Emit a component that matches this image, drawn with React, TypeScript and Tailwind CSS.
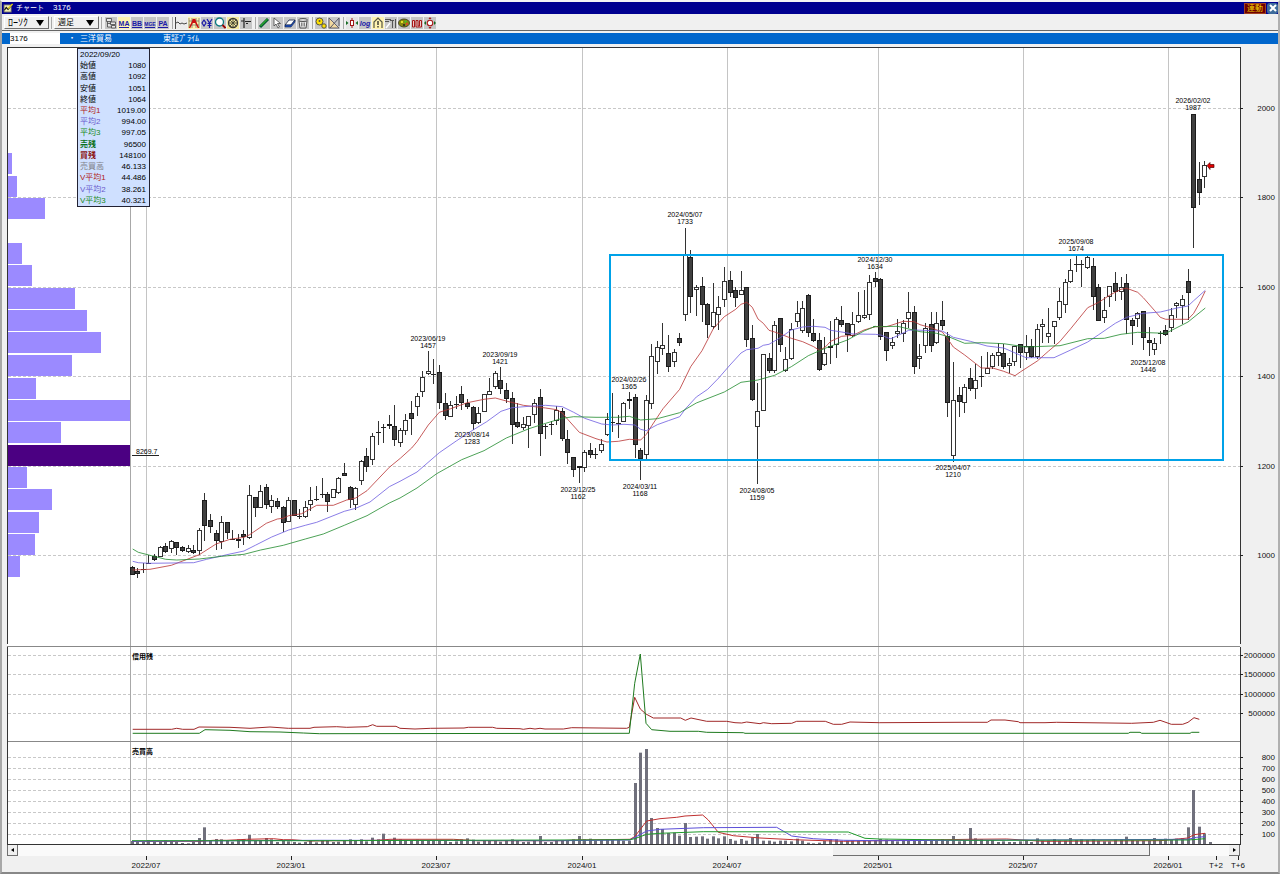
import React from "react";

type Point = [number, number];
// [hollow (1) or filled (0), body top, body bottom, wick top, wick bottom]
type Candle = [number, number, number, number, number];

const FONT = "font-['Liberation_Sans','Noto_Sans_CJK_JP',sans-serif]";
const STEP = 5.587;
const FIRST_X = 132.2;
const columnX = (i: number) => Math.floor(FIRST_X + STEP * i);

// Values are stored at three units per chart pixel, relative to each block's own origin.
const UNIT = 3;

const candleBlocks: { start: number; top: number; rows: Candle[] }[] = [
  {
    start: 0,
    top: 400,
    rows: [
      [0, 502, 524, 497, 526], [0, 513, 523, 505, 535], [0, 506, 509, 490, 518], [0, 489, 491, 466, 490],
      [0, 468, 481, 461, 484], [1, 440, 470, 438, 472], [0, 438, 455, 430, 460], [1, 424, 446, 421, 458],
      [0, 427, 445, 425, 466], [0, 442, 453, 438, 457], [1, 443, 457, 434, 460], [0, 449, 458, 434, 462],
      [1, 391, 454, 384, 466], [0, 300, 377, 279, 424], [0, 359, 382, 342, 398], [0, 399, 422, 390, 451],
      [1, 367, 427, 347, 446], [0, 367, 398, 365, 418], [0, 416, 418, 390, 420], [0, 417, 422, 402, 445],
      [0, 401, 412, 390, 434], [1, 286, 415, 256, 418], [0, 292, 323, 290, 350], [1, 274, 323, 256, 325],
      [0, 262, 315, 252, 328], [1, 301, 320, 286, 340], [0, 303, 322, 295, 328], [0, 322, 368, 318, 396],
      [1, 301, 367, 290, 367], [0, 300, 347, 300, 347], [0, 348, 350, 328, 358], [1, 322, 352, 303, 355],
      [1, 301, 314, 262, 332], [1, 296, 300, 258, 302], [0, 282, 285, 233, 295], [0, 283, 307, 277, 336],
      [1, 268, 295, 268, 295], [1, 235, 280, 232, 282], [0, 220, 227, 190, 228], [0, 262, 299, 258, 324],
      [1, 265, 314, 262, 330], [1, 184, 242, 181, 254], [0, 168, 200, 144, 217], [1, 107, 181, 98, 196],
      [0, 97, 99, 64, 136], [1, 80, 85, 72, 130], [0, 72, 78, 45, 86], [0, 78, 121, 16, 137],
      [1, 91, 130, 85, 141], [1, 61, 92, 42, 104], [0, 38, 58, 4, 106],
    ],
  },
  {
    start: 51,
    top: 320,
    rows: [
      [1, 227, 262, 219, 288], [1, 172, 215, 153, 230], [1, 153, 161, 94, 166], [0, 162, 164, 117, 193],
      [0, 157, 249, 136, 266], [0, 250, 287, 220, 300], [1, 256, 290, 243, 292], [0, 252, 254, 228, 268],
      [0, 222, 250, 199, 270], [0, 248, 260, 236, 267], [0, 260, 311, 258, 329], [1, 278, 308, 262, 312],
      [1, 223, 275, 223, 275], [1, 212, 224, 175, 225], [1, 160, 202, 152, 207], [0, 181, 208, 141, 222],
      [0, 210, 238, 188, 250], [0, 235, 314, 216, 371], [0, 307, 320, 250, 323], [1, 313, 325, 290, 330],
      [1, 287, 319, 287, 384], [1, 250, 286, 237, 310], [0, 232, 341, 207, 409], [0, 317, 319, 312, 358],
      [1, 312, 316, 302, 346], [1, 271, 304, 258, 316], [0, 272, 358, 264, 362], [0, 358, 398, 329, 432],
      [0, 412, 450, 410, 472], [0, 438, 444, 438, 488], [1, 397, 444, 390, 455], [0, 391, 406, 370, 413],
      [0, 403, 405, 385, 417], [1, 373, 392, 357, 400], [1, 298, 346, 278, 348], [0, 306, 309, 219, 335],
      [0, 308, 312, 285, 355], [1, 250, 305, 247, 305], [0, 238, 243, 215, 267], [0, 232, 375, 222, 413],
      [0, 390, 416, 384, 479], [1, 241, 404, 225, 420], [1, 107, 252, 73, 266], [1, 82, 127, 64, 162],
      [1, 76, 88, 9, 106], [0, 98, 140, 46, 155], [1, 97, 125, 86, 140],
    ],
  },
  {
    start: 98,
    top: 200,
    rows: [
      [0, 415, 430, 398, 437], [1, 165, 346, 84, 364], [0, 172, 290, 150, 340], [1, 262, 271, 256, 347],
      [0, 259, 314, 230, 365], [0, 313, 374, 310, 413], [1, 337, 382, 250, 388], [1, 322, 344, 289, 390],
      [1, 244, 299, 202, 320], [0, 241, 280, 212, 292], [0, 270, 295, 260, 322], [1, 271, 284, 213, 286],
      [0, 262, 420, 260, 441], [0, 415, 601, 376, 604], [1, 634, 682, 548, 852], [1, 463, 632, 463, 632],
      [0, 475, 512, 460, 518], [1, 374, 514, 363, 520], [0, 355, 434, 353, 455], [1, 478, 514, 440, 517],
      [1, 388, 478, 370, 480], [1, 340, 367, 302, 380], [1, 325, 394, 303, 400], [0, 285, 400, 282, 412],
      [0, 400, 422, 357, 426], [0, 421, 510, 400, 512], [1, 458, 494, 410, 498], [0, 439, 443, 362, 492],
      [1, 358, 436, 350, 474], [0, 361, 375, 317, 380], [0, 370, 404, 368, 456], [1, 373, 409, 335, 412],
      [1, 346, 366, 277, 370], [1, 346, 353, 270, 358], [1, 247, 346, 226, 360], [0, 235, 246, 217, 260],
      [0, 236, 410, 235, 420], [0, 395, 452, 395, 482], [1, 427, 438, 412, 446],
    ],
  },
  {
    start: 137,
    top: 240,
    rows: [
      [1, 274, 281, 237, 294], [1, 250, 283, 240, 307], [1, 217, 238, 157, 265], [0, 217, 380, 197, 402],
      [1, 349, 357, 313, 386], [1, 265, 317, 250, 340], [0, 253, 317, 217, 335], [1, 250, 310, 217, 312],
      [0, 241, 257, 182, 270], [0, 287, 488, 276, 532], [1, 481, 649, 366, 665], [0, 466, 485, 440, 530],
      [1, 440, 490, 433, 519], [0, 415, 447, 384, 452], [1, 421, 448, 372, 477], [0, 407, 409, 348, 440],
      [1, 384, 401, 335, 403], [1, 346, 380, 340, 388], [1, 337, 347, 309, 378], [0, 340, 380, 312, 388],
      [1, 370, 377, 355, 398], [1, 319, 367, 317, 378], [0, 313, 338, 311, 383], [1, 318, 338, 285, 360],
      [0, 318, 352, 298, 353], [1, 268, 352, 252, 357], [1, 253, 261, 237, 310], [1, 279, 292, 205, 308],
      [1, 244, 262, 242, 313], [1, 184, 235, 145, 240], [1, 127, 196, 117, 219], [1, 91, 127, 56, 130],
      [0, 73, 75, 48, 97], [0, 73, 75, 60, 141], [1, 52, 83, 46, 88], [0, 79, 171, 54, 209],
      [0, 141, 242, 132, 244], [1, 211, 235, 170, 249], [1, 139, 171, 138, 200], [0, 130, 155, 96, 182],
      [1, 142, 156, 110, 180], [0, 130, 240, 103, 283], [0, 240, 257, 235, 316], [1, 219, 238, 217, 260],
      [0, 214, 293, 213, 329], [0, 300, 308, 260, 347], [1, 309, 331, 293, 346], [0, 280, 283, 272, 312],
      [0, 271, 286, 255, 288], [1, 226, 265, 205, 276], [1, 190, 197, 185, 235], [1, 178, 197, 165, 253],
      [0, 124, 160, 88, 239],
    ],
  },
  { start: 190, top: 0, rows: [[0, 342, 623, 342, 745], [0, 536, 580, 487, 615], [1, 496, 532, 484, 564]] },
];

const segment = (x0: number, y0: number, values: number[]): Point[] => {
  const points: Point[] = [];
  for (let i = 0; i < values.length; i += 2) points.push([x0 + values[i] / UNIT, y0 + values[i + 1] / UNIT]);
  return points;
};
const toPath = (points: Point[]) => points.map(([x, y]) => `${x.toFixed(1)},${y.toFixed(1)}`).join(" ");

const priceAverages = [
  {
    color: "#b83232",
    points: [
      ...segment(130, 400, [8, 510, 60, 508, 124, 496, 208, 464, 258, 432, 300, 418, 342, 412, 359, 404, 409, 370, 442, 357, 459, 355, 476, 347, 515, 341, 560, 316, 610, 316, 650, 300, 677, 294, 711, 272, 778, 202, 811, 175, 845, 144]),
      ...segment(400, 320, [51, 365, 85, 315, 118, 277, 152, 266, 202, 248, 252, 238, 286, 234, 319, 243, 370, 256, 437, 264, 470, 269, 487, 279, 504, 299, 538, 337, 588, 356, 621, 366, 655, 364, 688, 358, 722, 360, 739, 343, 756, 316, 789, 266]),
      ...segment(600, 200, [239, 568, 272, 500, 306, 452, 340, 386, 373, 350, 407, 328, 423, 313, 440, 307, 457, 322, 474, 357, 490, 370, 507, 391, 524, 396, 541, 402, 574, 415, 608, 425, 641, 440, 658, 451, 675, 442, 692, 424, 725, 409, 759, 406, 792, 390, 826, 380, 859, 380]),
      ...segment(860, 240, [96, 255, 130, 244, 163, 245, 180, 254, 213, 263, 247, 276, 264, 298, 280, 321, 314, 345, 364, 384, 398, 384, 431, 394, 465, 407, 482, 395, 532, 363, 565, 334, 599, 305, 632, 266, 683, 203, 716, 187, 750, 165, 783, 148, 800, 145, 833, 157, 850, 173, 884, 212, 901, 232, 917, 238, 984, 238, 1001, 220, 1018, 190, 1036, 153]),
    ],
  },
  {
    color: "#6c5ce0",
    points: [
      ...segment(130, 400, [8, 484, 25, 488, 60, 490, 191, 488, 230, 478, 300, 462, 342, 453, 376, 436, 425, 411, 476, 390, 526, 376, 560, 367, 600, 351, 643, 334, 677, 325, 720, 306, 778, 260]),
      ...segment(400, 320, [0, 484, 51, 456, 118, 398, 170, 362, 219, 330, 260, 305, 303, 274, 336, 263, 387, 259, 437, 256, 487, 260, 521, 277, 554, 295, 605, 312, 638, 315, 672, 313, 705, 315, 722, 328, 739, 332, 772, 314, 805, 302]),
      ...segment(600, 200, [239, 650, 256, 627, 289, 591, 323, 568, 356, 534, 390, 495, 423, 459, 440, 449, 474, 445, 490, 436, 507, 433, 541, 413, 574, 390, 608, 381, 641, 379, 675, 382, 692, 391, 725, 396, 759, 402, 826, 403, 842, 405, 870, 416]),
      ...segment(860, 240, [80, 295, 96, 295, 146, 271, 163, 270, 247, 273, 280, 292, 331, 304, 381, 318, 431, 324, 498, 353, 582, 353, 632, 330, 683, 306, 716, 284, 766, 250, 800, 232, 850, 220, 901, 216, 951, 204, 984, 198, 1001, 182, 1036, 151]).slice(1),
    ],
  },
  {
    color: "#1f8a2c",
    points: [
      ...segment(130, 400, [8, 447, 25, 457, 60, 466, 107, 478, 140, 480, 208, 477, 275, 469, 342, 463, 392, 450, 460, 436, 526, 417, 580, 402, 643, 376, 711, 347, 778, 309]),
      ...segment(400, 320, [0, 534, 51, 504, 110, 461, 185, 419, 252, 392, 319, 354, 387, 326, 437, 310, 487, 295, 521, 290, 588, 292, 655, 292, 688, 289, 722, 300, 772, 296]),
      ...segment(600, 200, [239, 638, 289, 609, 373, 576, 423, 547, 474, 540, 524, 526, 574, 500, 625, 467, 675, 445, 742, 420, 792, 393, 826, 379]),
      ...segment(860, 240, [40, 260, 113, 259, 180, 275, 230, 280, 270, 292, 314, 310, 364, 308, 431, 311, 498, 321, 600, 317, 683, 296, 733, 295, 783, 283, 833, 277, 917, 280, 984, 246, 1036, 204]),
    ],
  },
];

const marginLines = [
  {
    color: "#a02828",
    points: [
      ...segment(0, 640, [398, 268, 515, 268, 530, 265, 548, 268, 582, 268, 597, 261, 690, 262, 750, 265, 810, 261, 865, 265, 930, 265]),
      ...segment(310, 700, [0, 85, 12, 82, 80, 80, 110, 82, 172, 80, 188, 74, 200, 79, 258, 79, 270, 85, 315, 87, 362, 85, 462, 84, 475, 82, 548, 82, 560, 85, 630, 86, 640, 88, 660, 85, 675, 87, 690, 85, 705, 87, 760, 87]),
      ...segment(560, 640, [35, 263, 200, 265, 208, 262, 224, 172, 241, 207, 258, 222, 280, 234, 362, 234, 376, 241, 393, 234, 440, 244, 500, 244, 525, 248, 545, 249, 560, 246, 600, 251, 610, 248, 635, 251, 695, 250, 710, 244, 796, 244, 820, 253, 845, 253, 870, 246, 958, 248]),
      ...segment(960, 640, [0, 247, 82, 247, 93, 240, 135, 240, 175, 245, 180, 248, 255, 248, 290, 247, 515, 250, 580, 247, 600, 241, 634, 253, 668, 253, 684, 247, 702, 233, 718, 238]),
    ],
  },
  {
    color: "#1f7a1f",
    points: [
      ...segment(0, 640, [398, 280, 598, 280, 615, 269, 690, 271, 750, 275, 840, 276, 910, 279, 958, 281]),
      ...segment(560, 640, [208, 280, 224, 130, 241, 42, 258, 250, 275, 269, 330, 274, 415, 274, 440, 277, 550, 278, 555, 280, 960, 280]),
      ...segment(960, 640, [505, 280, 510, 277, 540, 277, 545, 280, 690, 280, 695, 277, 718, 277]),
    ],
  },
];

const volumeAverages = [
  {
    color: "#c03030",
    points: [
      ...segment(0, 640, [396, 604, 600, 604, 640, 601, 680, 601, 740, 598, 820, 596, 850, 599, 875, 599, 928, 603]),
      ...segment(310, 700, [200, 421, 240, 418, 430, 418, 500, 422]),
      ...segment(560, 640, [0, 602, 50, 600, 210, 598, 224, 590, 260, 543, 300, 536, 350, 532, 375, 528, 428, 525, 445, 540, 475, 577, 520, 587, 600, 594, 700, 599, 850, 604, 958, 602]),
      ...segment(960, 640, [30, 598, 140, 597, 250, 604, 600, 602, 684, 594, 702, 584, 735, 580]),
    ],
  },
  {
    color: "#5c50d8",
    points: [
      ...segment(0, 640, [396, 604, 958, 601]),
      ...segment(560, 640, [0, 602, 210, 600, 260, 573, 300, 568, 430, 563, 650, 562, 695, 588, 760, 596, 850, 601, 958, 602]),
      ...segment(960, 640, [684, 598, 710, 592, 735, 590]),
    ],
  },
  {
    color: "#1f9a2c",
    points: [
      ...segment(0, 640, [396, 602, 958, 602]),
      ...segment(560, 640, [0, 600, 210, 599, 224, 596, 260, 583, 300, 580, 430, 575, 865, 576, 915, 595, 958, 597]),
      ...segment(960, 640, [30, 601, 684, 600, 735, 596]),
    ],
  },
];

const volumeTops = [
  603, 605, 605, 600, 606, 606, 601, 604, 606, 609, 610, 606, 594, 562, 602, 597, 598, 601, 605, 598, 597, 585, 603, 600,
  594, 598, 606, 601, 604, 606, 608, 606, 601, 607, 600, 600, 606, 605, 600, 598, 603, 598, 604, 593, 598, 581, 600, 593,
  598, 600, 600, 599, 600, 600, 600, 600, 600, 606, 604, 598, 595, 599, 605, 600, 602, 600, 605, 600, 598, 602, 606, 605,
  600, 588, 606, 606, 603, 603, 603, 598, 588, 598, 596, 602, 600, 598, 600, 600, 602, 602, 429, 338, 327, 534, 564, 567,
  579, 578, 587, 549, 591, 590, 589, 596, 589, 595, 589, 597, 602, 597, 602, 592, 582, 602, 602, 605, 602, 602, 604, 596,
  602, 608, 610, 608, 603, 597, 598, 603, 602, 602, 602, 603, 603, 600, 597, 599, 602, 604, 600, 602, 600, 598, 603, 600,
  602, 598, 601, 588, 604, 600, 564, 595, 598, 600, 600, 606, 604, 606, 606, 604, 600, 606, 595, 602, 602, 597, 602, 602,
  594, 600, 598, 600, 597, 602, 604, 604, 598, 598, 590, 600, 602, 602, 602, 594, 598, 596, 600, 596, 594, 562, 450, 560,
  580, 606,
];

const profileBars = [
  { y: 153, w: 4 }, { y: 176, w: 9 }, { y: 198, w: 37 }, { y: 243, w: 14 }, { y: 265, w: 24 }, { y: 288, w: 67 },
  { y: 310, w: 79 }, { y: 332, w: 93 }, { y: 355, w: 64 }, { y: 378, w: 28 }, { y: 400, w: 122 }, { y: 422, w: 53 },
  { y: 445, w: 122, peak: true }, { y: 467, w: 19 }, { y: 489, w: 44 }, { y: 512, w: 31 }, { y: 534, w: 27 }, { y: 556, w: 12 },
];

const pivots = [
  { x: 428, y: 341, date: "2023/06/19", value: "1457" },
  { x: 472, y: 437, date: "2023/08/14", value: "1283" },
  { x: 500, y: 357, date: "2023/09/19", value: "1421" },
  { x: 578, y: 492, date: "2023/12/25", value: "1162" },
  { x: 629, y: 382, date: "2024/02/26", value: "1365" },
  { x: 640, y: 489, date: "2024/03/11", value: "1168" },
  { x: 685, y: 217, date: "2024/05/07", value: "1733" },
  { x: 757, y: 493, date: "2024/08/05", value: "1159" },
  { x: 875, y: 262, date: "2024/12/30", value: "1634" },
  { x: 953, y: 470, date: "2025/04/07", value: "1210" },
  { x: 1076, y: 244, date: "2025/09/08", value: "1674" },
  { x: 1148, y: 365, date: "2025/12/08", value: "1446" },
  { x: 1193, y: 103, date: "2026/02/02", value: "1987" },
];

const scale = [
  { y: 108, label: "2000" }, { y: 197, label: "1800" }, { y: 287, label: "1600" }, { y: 376, label: "1400" },
  { y: 466, label: "1200" }, { y: 555, label: "1000" }, { y: 655, label: "2000000" }, { y: 674, label: "1500000" },
  { y: 694, label: "1000000" }, { y: 713, label: "500000" }, { y: 757, label: "800" }, { y: 768, label: "700" },
  { y: 779, label: "600" }, { y: 790, label: "500" }, { y: 801, label: "400" }, { y: 812, label: "300" },
  { y: 823, label: "200" }, { y: 834, label: "100" },
];

const months = [
  { x: 146, label: "2022/07" }, { x: 291, label: "2023/01" }, { x: 436, label: "2023/07" }, { x: 582, label: "2024/01" },
  { x: 727, label: "2024/07" }, { x: 878, label: "2025/01" }, { x: 1023, label: "2025/07" }, { x: 1168, label: "2026/01" },
];
const futureTicks = [{ x: 1216, label: "T+2" }, { x: 1238, label: "T+6" }];

const quote = [
  { label: "始値", value: "1080", tone: "font-normal text-black" },
  { label: "高値", value: "1092", tone: "font-normal text-black" },
  { label: "安値", value: "1051", tone: "font-normal text-black" },
  { label: "終値", value: "1064", tone: "font-normal text-black" },
  { label: "平均1", value: "1019.00", tone: "font-normal text-[#b02020]" },
  { label: "平均2", value: "994.00", tone: "font-normal text-[#6a5acd]" },
  { label: "平均3", value: "997.05", tone: "font-normal text-[#1a8a1a]" },
  { label: "売残", value: "96500", tone: "font-bold text-[#0a7020]" },
  { label: "買残", value: "148100", tone: "font-bold text-[#8b1010]" },
  { label: "売買高", value: "46.133", tone: "font-normal text-[#808088]" },
  { label: "V平均1", value: "44.486", tone: "font-normal text-[#b02020]" },
  { label: "V平均2", value: "38.261", tone: "font-normal text-[#6a5acd]" },
  { label: "V平均3", value: "40.321", tone: "font-normal text-[#1a8a1a]" },
];

function Candles() {
  return (
    <g shapeRendering="crispEdges">
      {candleBlocks.flatMap(({ start, top, rows }) =>
        rows.map(([hollow, bodyTop, bodyBottom, high, low], n) => {
          const x = columnX(start + n);
          const y1 = Math.round(top + bodyTop / UNIT);
          const y2 = Math.max(y1 + 1, Math.round(top + bodyBottom / UNIT));
          return (
            <g key={start + n}>
              <path d={`M${x + 0.5} ${Math.round(top + high / UNIT)}V${Math.round(top + low / UNIT)}`} stroke="#333" />
              {y2 - y1 < 2 ? (
                <rect x={x - 2} y={y1} width={5} height={1} fill="#222" />
              ) : (
                <rect
                  x={x - 1.5}
                  y={y1 + 0.5}
                  width={4}
                  height={Math.max(1, y2 - y1 - 1)}
                  fill={hollow ? "#fff" : "#404040"}
                  stroke={hollow ? "#333" : "#1c1c1c"}
                />
              )}
            </g>
          );
        }),
      )}
    </g>
  );
}

function PriceChart() {
  return (
    <svg viewBox="0 45 1276 800" className={`block w-full ${FONT}`} role="img" aria-label="3176 三洋貿易 週足">
      <rect x="5" y="47" width="1233" height="798" fill="#fff" />
      <g transform="translate(-2 0)">
        <g shapeRendering="crispEdges">
          {scale.map(({ y, label }) => (
            <path key={label + y} d={`M8 ${y + 0.5}H1240`} stroke="#c8c8c8" strokeDasharray="3 2" />
          ))}
          {months.map(({ x }) => (
            <path key={x} d={`M${x + 0.5} 48V845`} stroke="#c4c4c4" />
          ))}
          <path d="M130.5 48V845" stroke="#a8a8a8" />
          {profileBars.map(({ y, w, peak }) => (
            <rect key={y} x="8" y={y} width={w} height="21" fill={peak ? "#4b0082" : "#9b8aff"} />
          ))}
        </g>

        {volumeTops.map((top, i) => {
          const y = 640 + top / UNIT;
          return <rect key={i} x={columnX(i) - 1} y={y} width="3" height={845 - y} fill="#70707c" />;
        })}
        {[...marginLines, ...volumeAverages].map(({ color, points }, i) => (
          <polyline key={i} points={toPath(points)} fill="none" stroke={color} strokeWidth="1" />
        ))}

        <Candles />
        {priceAverages.map(({ color, points }) => (
          <polyline key={color} points={toPath(points)} fill="none" stroke={color} strokeWidth="0.8" />
        ))}

        <rect x="610" y="255" width="613" height="205" fill="none" stroke="#00a2e8" strokeWidth="2" />
        <path d="M1207 165.5l3-3v2h4v3h-4v2z" fill="#e00000" stroke="#500" strokeWidth="0.7" />

        {pivots.map(({ x, y, date, value }) => (
          <g key={date} className="text-[7px]" textAnchor="middle" fill="#000">
            <text x={x} y={y}>{date}</text>
            <text x={x} y={y + 7}>{value}</text>
          </g>
        ))}
        <text x="136" y="454" className="text-[7px]">8269.7</text>
        <path d="M132 455.5H159" stroke="#222" shapeRendering="crispEdges" />
        <text x="132" y="659" className="text-[7px] font-bold">信用残</text>
        <text x="132" y="754" className="text-[7px] font-bold">売買高</text>

        <g shapeRendering="crispEdges" fill="none">
          <path d="M7 646.5H1240M7 741.5H1240" stroke="#888" />
          <path d="M7.5 644V47.5H1240.5V644M7.5 647V844.5H1240.5V647" stroke="#333" />
          {scale.map(({ y, label }) => (
            <path key={label + y} d={`M1240 ${y + 0.5}H1243`} stroke="#222" />
          ))}
        </g>
        <g className="text-[8px]" textAnchor="end" fill="#111">
          {scale.map(({ y, label }) => (
            <text key={label + y} x="1275" y={y + 3}>{label}</text>
          ))}
        </g>
      </g>
    </svg>
  );
}

function QuoteBox() {
  return (
    <table aria-label="四本値" className="absolute top-[3px] left-[75px] h-[159px] w-[73px] border border-[#223] bg-[#cfe0ff] text-[8px] leading-[11px] whitespace-nowrap">
      <thead>
        <tr>
          <th colSpan={2} className="px-[2px] py-0 text-left font-normal">2022/09/20</th>
        </tr>
      </thead>
      <tbody>
        {quote.map(({ label, value, tone }) => (
          <tr key={label}>
            <th scope="row" className={`py-0 pl-[2px] text-left ${tone}`}>{label}</th>
            <td className="py-0 pr-[3px] text-right">{value}</td>
          </tr>
        ))}
      </tbody>
    </table>
  );
}

function Glyph({ children, bg = "#c6c6c6" }: { children: React.ReactNode; bg?: string }) {
  return (
    <svg viewBox="0 0 12 12" className="size-3" aria-hidden="true">
      <rect width="12" height="12" fill={bg} />
      {children}
    </svg>
  );
}

function Letters({ text, bg, size = "text-[7px]" }: { text: string; bg?: string; size?: string }) {
  return (
    <Glyph bg={bg}>
      <text x="6" y="9" textAnchor="middle" className={`font-bold ${size}`} fill="#1a1aa8">{text}</text>
      <path d="M1 10.5H11" stroke="#1a1aa8" />
    </Glyph>
  );
}

const toolGroups: { name: string; icon: React.ReactNode }[][] = [
  [
    { name: "銘柄リンク", icon: <Glyph><path d="M1.500 1.500h5v3h-5zM5.500 5h5v2.500h-5zM6.500 8.500h4v2.500h-4zM2.500 4.500v5.500h4M2.500 6.500h3" fill="#e8e8e8" stroke="#444" strokeWidth="0.8" /></Glyph> },
    { name: "移動平均", icon: <Letters text="MA" bg="#fff3b0" /> },
    { name: "ボリンジャー", icon: <Letters text="BB" /> },
    { name: "MGE", icon: <Letters text="MGE" size="text-[5px]" /> },
    { name: "PA", icon: <Letters text="PA" /> },
  ],
  [
    { name: "ライン", icon: <Glyph bg="#ececec"><path d="M0.500 0V12M1 6l2-1 2 2 2-1 2 1 3-1" fill="none" stroke="#333" strokeWidth="0.9" /></Glyph> },
    { name: "価格帯", icon: <Glyph bg="#fff3b0"><path d="M1 4H11M1 8H11M4 1V11M8 1V11M1 1V11M11 1V11" stroke="#555" strokeWidth="0.6" /><path d="M1.500 11L5 4 6 2.500 7 4l3.500 7" fill="none" stroke="#cc1010" strokeWidth="1.500" /><rect x="4.500" y="2" width="3" height="4" fill="#cc1010" /></Glyph> },
    { name: "円表示", icon: <Glyph><path d="M3 3l2 3-2 3-2-3zM6 2l2.500 4L11 2M8.500 6v5M6.500 6.500h4M6.500 8.500h4" fill="none" stroke="#1818a8" strokeWidth="1.2" /></Glyph> },
    { name: "拡大", icon: <Glyph><circle cx="5.500" cy="5" r="4" fill="#fff" stroke="#0a7a80" strokeWidth="1.3" /><path d="M8.500 8l3 3" stroke="#900" strokeWidth="1.800" /></Glyph> },
    { name: "全体", icon: <Glyph bg="#f4e8a0"><circle cx="6" cy="6" r="4.500" fill="none" stroke="#333" strokeWidth="1.300" /><path d="M6 1v10M1 6h10M3 3l6 6M9 3l-6 6" stroke="#443" strokeWidth="0.9" /></Glyph> },
    { name: "十字線", icon: <Glyph><path d="M4 1v10M1 4h3M5 4.500h6M6 6.500h2" fill="none" stroke="#222" strokeWidth="1.200" /></Glyph> },
  ],
  [
    { name: "描画", icon: <Glyph><path d="M2 10L10 2" stroke="#053" strokeWidth="3" /><path d="M2.500 9L9.500 2" stroke="#2ca52c" strokeWidth="1.400" /></Glyph> },
    { name: "選択", icon: <Glyph><path d="M3 1v8l2-2 2 4 1.500-1-2-3.500h3z" fill="#fff" stroke="#444" strokeWidth="0.8" /></Glyph> },
    { name: "消しゴム", icon: <Glyph><path d="M1 8l4-5h6l-4 5z" fill="#fff" stroke="#124" strokeWidth="0.8" /><path d="M1 8h6l4-5v2l-4 5H1z" fill="#1c50c8" stroke="#124" strokeWidth="0.6" /></Glyph> },
    { name: "全削除", icon: <Glyph><path d="M2 4h8l-1 7H3z" fill="#eee" stroke="#444" strokeWidth="0.9" /><ellipse cx="6" cy="3" rx="4.500" ry="1.500" fill="#ddd" stroke="#444" strokeWidth="0.9" /><path d="M4.500 5.500v4M6 5.500v4M7.500 5.500v4" stroke="#555" strokeWidth="0.7" /></Glyph> },
  ],
  [
    { name: "パラメータ", icon: <Glyph><circle cx="4.500" cy="4.500" r="3.500" fill="#ffe000" stroke="#554" /><circle cx="4.500" cy="4" r="1" fill="#554" /><circle cx="9" cy="9" r="2.200" fill="#ffe000" stroke="#554" /></Glyph> },
    { name: "定規", icon: <Glyph><path d="M1 1v10h10z" fill="#f2d9a0" stroke="#556" strokeWidth="0.9" /><path d="M11 1v8M11 1L2 11" fill="none" stroke="#556" strokeWidth="1" /></Glyph> },
  ],
  [
    { name: "足幅", icon: <Glyph bg="#e4e4e4"><path d="M6 1v10" stroke="#a01818" /><rect x="4.500" y="3.500" width="3" height="5" fill="#fff" stroke="#a01818" /><path d="M0 4l2.500 2L0 8zM12 4L9.500 6 12 8z" fill="#136a20" /></Glyph> },
    { name: "対数", icon: <Glyph><text x="6" y="9" textAnchor="middle" className="text-[7px] font-bold italic" fill="#1a1aa8">log</text></Glyph> },
    { name: "警告", icon: <Glyph bg="#fff3b0"><path d="M2 11V5l4-4 4 4v6" fill="none" stroke="#554" strokeWidth="1.200" /><path d="M6 4v4M6 9v1.500" stroke="#222" strokeWidth="1.300" /></Glyph> },
    { name: "比較", icon: <Glyph><path d="M0 2.500h6M0 4.500h4M5 3.500h4M7.500 4v7M10.500 2v9" stroke="#555" strokeWidth="1" /><path d="M1 11l4-5" stroke="#fff" strokeWidth="1.500" /></Glyph> },
    { name: "配色", icon: <Glyph><ellipse cx="6" cy="6" rx="5.500" ry="4" fill="#8a8a10" stroke="#332" strokeWidth="0.8" /><circle cx="4" cy="5" r="1" fill="#ff3" /><circle cx="7.500" cy="4.500" r="1" fill="#3c3" /><circle cx="6" cy="8" r="1.100" fill="#222" /><circle cx="9" cy="7" r="1" fill="#e33" /></Glyph> },
    { name: "複数表示", icon: <Glyph><path d="M1.500 10V3.500h2V10zM5 10V3.500h2V9h1.500V3.500h2V10z" fill="#ecc" stroke="#a81818" strokeWidth="1" /></Glyph> },
    { name: "中央", icon: <Glyph><circle cx="6" cy="6" r="2.800" fill="#fff" stroke="#a81818" strokeWidth="1.100" /><path d="M6 0l1.500 2h-3zM6 12l1.500-2h-3z" fill="#a81818" /><path d="M0 6l2-2v4zM12 6l-2-2v4z" fill="#136a20" /></Glyph> },
  ],
];

function DropButton({ children, size }: { children: React.ReactNode; size: string }) {
  return (
    <button type="button" className="flex h-[13px] w-[45px] items-center justify-between border border-t-white border-r-[#707070] border-b-[#707070] border-l-white bg-[#f0f0f0] pr-1 pl-[3px] leading-none">
      <span className={size}>{children}</span>
      <svg viewBox="0 0 8 6" className="h-[6px] w-2" aria-hidden="true"><path d="M0 0H8L4 6z" fill="#000" /></svg>
    </button>
  );
}

const Separator = () => <span className="mx-[2px] h-3 w-px bg-[#a8a8a8]" />;

function ScrollButton({ label, d, side }: { label: string; d: string; side: string }) {
  return (
    <button type="button" aria-label={label} className={`flex h-[11px] w-[11px] items-center justify-center border-r border-b border-[#707070] bg-[#f0f0f0] ${side}`}>
      <svg viewBox="0 0 4 4" className="size-1" aria-hidden="true"><path d={d} /></svg>
    </button>
  );
}

export default function App() {
  return (
    <main className={`w-full border-2 border-t-[#f4f4f4] border-r-[#b0b0b0] border-b-[#888] border-l-[#a8a8a8] bg-[#f0f0f0] text-black ${FONT}`}>
      <header className="flex h-3 items-center bg-[#000090] text-white">
        <svg viewBox="0 0 11 11" className="ml-px h-[10px] w-[11px]" aria-hidden="true">
          <rect x="0.500" y="2" width="8" height="8" fill="#f4f0b0" stroke="#556" />
          <path d="M1 8l2-3 2 2 5-6" fill="none" stroke="#111" strokeWidth="1.300" />
          <path d="M5 6l5-5" stroke="#e8d820" strokeWidth="1.500" />
        </svg>
        <h1 className="ml-[2px] flex gap-[9px] leading-3">
          <span className="text-[7px]">チャート</span>
          <span className="text-[8px]">3176</span>
        </h1>
        <div className="ml-auto flex items-center gap-px">
          <button type="button" className="h-[11px] border border-[#a04020] bg-[#700000] px-[2px] text-[8px] leading-[9px] text-[#f0d000]">連動</button>
          <button type="button" aria-label="閉じる" className="flex size-[11px] items-center justify-center rounded-[3px] bg-[#3d6c9c]">
            <svg viewBox="0 0 8 8" className="size-2" aria-hidden="true"><path d="M1 1l6 6M7 1L1 7" stroke="#fff" strokeWidth="2" /></svg>
          </button>
        </div>
      </header>

      <div className="flex h-[17px] items-center border-b border-[#666] pt-px pl-[2px]">
        <DropButton size="text-[10px]">ﾛｰｿｸ</DropButton>
        <Separator />
        <DropButton size="text-[8px]">週足</DropButton>
        <Separator />
        <div className="ml-px flex items-center">
          {toolGroups.map((group, n) => (
            <React.Fragment key={n}>
              {n > 0 && <Separator />}
              <div className="mr-px flex gap-px">
                {group.map(({ name, icon }) => (
                  <button key={name} type="button" aria-label={name}>{icon}</button>
                ))}
              </div>
            </React.Fragment>
          ))}
        </div>
      </div>

      <div className="mt-[2px] flex h-[11px] items-center bg-[#0066cc] pl-2 text-white">
        <input aria-label="銘柄コード" defaultValue="3176" className="h-[11px] w-[50px] bg-white text-[8px] leading-[11px] text-black" />
        <p className="ml-1 flex text-[8px] leading-[11px]">
          <span className="w-4 text-center">・</span>
          <span className="w-[83px]">三洋貿易</span>
          <span>東証ﾌﾟﾗｲﾑ</span>
        </p>
      </div>

      <section className="relative mt-px">
        <PriceChart />
        <QuoteBox />
      </section>

      <div className="mr-[38px] ml-[5px] flex h-[11px] bg-[#fafafa]">
        <ScrollButton label="左へ" d="M3 0V4L0 2z" side="border-l" />
        <div className="flex-[816]" />
        <div className="flex-[316] border-r border-b border-[#707070] bg-[#f0f0f0]" />
        <div className="flex-[79]" />
        <ScrollButton label="右へ" d="M1 0V4L4 2z" side="" />
      </div>
      <svg viewBox="0 856 1276 16" className={`block w-full text-[8px] ${FONT}`} aria-hidden="true">
        <g transform="translate(-2 0)" textAnchor="middle" fill="#111">
          {[...months, ...futureTicks].map(({ x, label }) => (
            <g key={label}>
              <path d={`M${x + 0.5} 856V860`} stroke="#222" />
              <text x={x} y="868">{label}</text>
            </g>
          ))}
        </g>
      </svg>
    </main>
  );
}
